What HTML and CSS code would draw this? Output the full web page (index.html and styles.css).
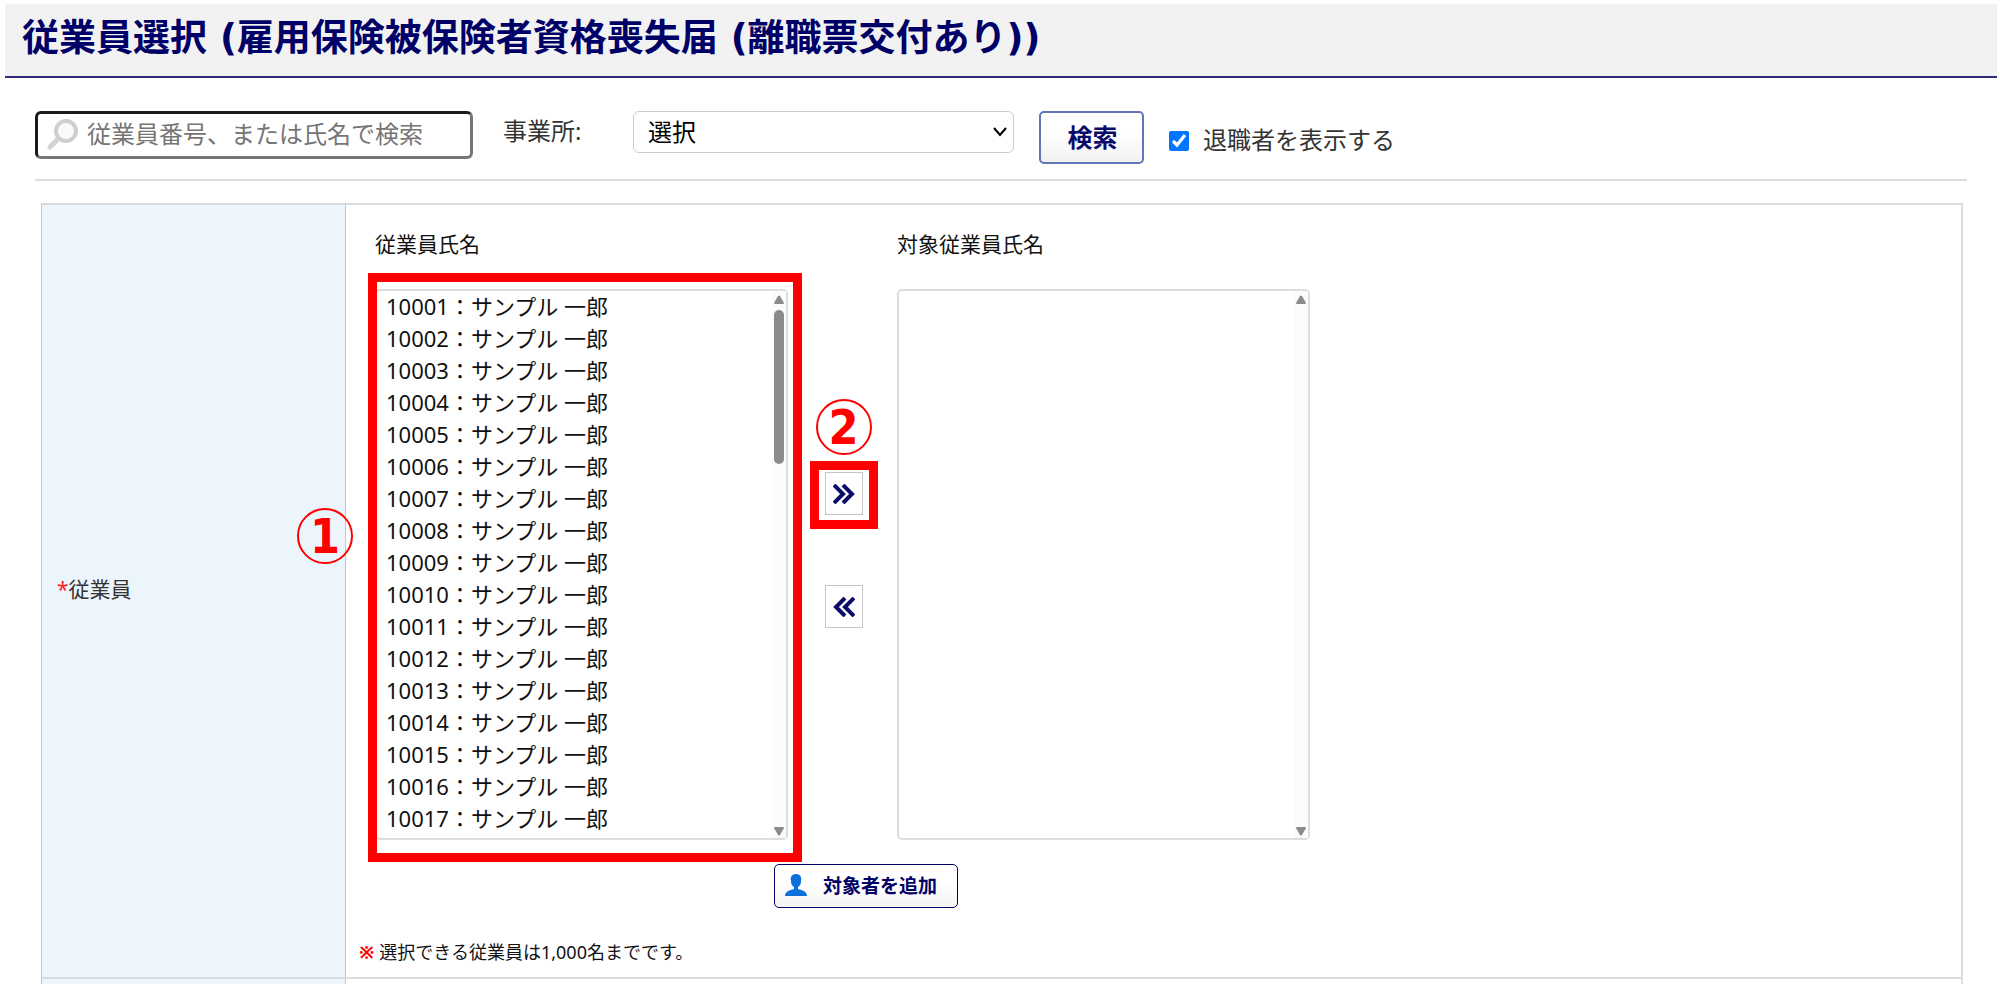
FILE: index.html
```html
<!DOCTYPE html>
<html lang="ja">
<head>
  <meta charset="UTF-8" />
  <meta name="viewport" content="width=device-width, initial-scale=1.0"/>
  <title>従業員選択</title>
  <link rel="stylesheet" href="styles.css">
</head>
<body>
  <header class="page-title">
    <h1>従業員選択 (雇用保険被保険者資格喪失届 (離職票交付あり))</h1>
  </header>

  <form class="search">
    <div class="search-box">
      <svg class="search-icon" viewBox="0 0 32 32" aria-hidden="true">
        <path d="M11 20 L3 28" stroke="#d2d2d2" stroke-width="5" stroke-linecap="round"/>
        <circle cx="19" cy="12" r="10" fill="#fafafa" stroke="#cfcfcf" stroke-width="4"/>
      </svg>
      <input type="text" class="search-input" aria-label="従業員検索" placeholder="従業員番号、または氏名で検索" />
    </div>
    <label class="office-label" for="office">事業所:</label>
    <div class="office-box">
      <select id="office" class="office">
        <option>選択</option>
      </select>
      <svg class="office-arrow" viewBox="0 0 16 16" aria-hidden="true">
        <path d="M2 4 L8 11 L14 4" fill="none" stroke="#000" stroke-width="2"/>
      </svg>
    </div>
    <button type="button" class="search-button">検索</button>
    <div class="retired">
      <input type="checkbox" id="retired" checked />
      <label for="retired">退職者を表示する</label>
    </div>
  </form>

  <table class="form-table">
    <tr>
      <th scope="row"><span class="required">*</span>従業員<span class="step step-one">1</span></th>
      <td>
        <div class="picker">
          <label class="list-label" for="source">従業員氏名</label>
          <span></span>
          <label class="list-label" for="target">対象従業員氏名</label>

          <div class="listbox">
            <select id="source" multiple>
              <option>10001：サンプル 一郎</option>
              <option>10002：サンプル 一郎</option>
              <option>10003：サンプル 一郎</option>
              <option>10004：サンプル 一郎</option>
              <option>10005：サンプル 一郎</option>
              <option>10006：サンプル 一郎</option>
              <option>10007：サンプル 一郎</option>
              <option>10008：サンプル 一郎</option>
              <option>10009：サンプル 一郎</option>
              <option>10010：サンプル 一郎</option>
              <option>10011：サンプル 一郎</option>
              <option>10012：サンプル 一郎</option>
              <option>10013：サンプル 一郎</option>
              <option>10014：サンプル 一郎</option>
              <option>10015：サンプル 一郎</option>
              <option>10016：サンプル 一郎</option>
              <option>10017：サンプル 一郎</option>
            </select>
            <div class="scroll">
              <svg viewBox="0 0 12 10" aria-hidden="true"><path d="M5 1 Q6 0 7 1 L11 8 Q11 9 10 9 H2 Q1 9 1 8 Z" fill="#8b8b8b"/></svg>
              <div class="thumb"></div>
              <svg class="down" viewBox="0 0 12 10" aria-hidden="true"><path d="M5 9 Q6 10 7 9 L11 2 Q11 1 10 1 H2 Q1 1 1 2 Z" fill="#8b8b8b"/></svg>
            </div>
            <div class="frame list-frame"></div>
          </div>

          <div class="movers">
            <div class="mover">
              <button type="button" aria-label="追加">
                <svg viewBox="0 0 22 20" aria-hidden="true"><path d="M1 1 L10 10 L1 19 M10 1 L19 10 L10 19" fill="none" stroke="#0b0b6b" stroke-width="4"/></svg>
              </button>
              <div class="frame mover-frame"></div>
              <span class="step step-two">2</span>
            </div>
            <div class="mover">
              <button type="button" aria-label="削除">
                <svg viewBox="0 0 22 20" aria-hidden="true"><path d="M21 1 L12 10 L21 19 M12 1 L3 10 L12 19" fill="none" stroke="#0b0b6b" stroke-width="4"/></svg>
              </button>
            </div>
          </div>

          <div class="listbox">
            <select id="target" multiple></select>
            <div class="scroll">
              <svg viewBox="0 0 12 10" aria-hidden="true"><path d="M5 1 Q6 0 7 1 L11 8 Q11 9 10 9 H2 Q1 9 1 8 Z" fill="#8b8b8b"/></svg>
              <svg class="down" viewBox="0 0 12 10" aria-hidden="true"><path d="M5 9 Q6 10 7 9 L11 2 Q11 1 10 1 H2 Q1 1 1 2 Z" fill="#8b8b8b"/></svg>
            </div>
          </div>
        </div>

        <button type="button" class="add-button">
          <svg viewBox="0 0 22 22" aria-hidden="true"><path d="M11 0 C7 0 5 3 6 7 C6 10 7 12 9 13 V15 C6 16 0 17 0 22 H22 C22 17 16 16 13 15 V13 C15 12 16 10 16 7 C17 3 15 0 11 0 Z" fill="#0b70db"/></svg>
          対象者を追加
        </button>
        <p class="note"><strong>※</strong>選択できる従業員は1,000名までです。</p>
      </td>
    </tr>
    <tr class="next-row">
      <th></th>
      <td></td>
    </tr>
  </table>
</body>
</html>
```

FILE: styles.css
```css
* {
  box-sizing: border-box;
}
body {
  margin: 4px 3px 0 5px;
  font-family: "Noto Sans", "Noto Sans CJK JP", sans-serif;
  font-size: 24px;
  color: #333;
  background: #fff;
}
input, select, button {
  font-family: inherit;
  margin: 0;
}
.page-title {
  background: #f2f2f2;
  border-bottom: 2px solid #2b2b78;
  padding: 11px 17px 13px;
}
h1 {
  margin: 0;
  font-family: "DejaVu Sans", "Noto Sans CJK JP", sans-serif;
  font-size: 37px;
  line-height: 48px;
  color: #000066;
}

/* search bar */
.search {
  display: flex;
  align-items: flex-start;
  margin: 33px 30px 0;
  height: 70px;
  border-bottom: 2px solid #ddd;
}
.search-box {
  display: flex;
  align-items: center;
  width: 438px;
  height: 48px;
  padding-left: 9px;
  border: 3px solid;
  border-color: #1b1b1b #767676 #767676 #1b1b1b;
  border-radius: 6px;
}
.search-icon {
  width: 32px;
  height: 32px;
}
.search-input {
  flex: 1;
  min-width: 0;
  padding: 0 0 4px 8px;
  border: none;
  outline: none;
  font-size: 24px;
  background: none;
}
.search-input::placeholder {
  color: #757575;
}
.office-label {
  width: 130px;
  margin-left: 30px;
  line-height: 40px;
}
.office-box {
  position: relative;
  width: 381px;
}
.office {
  appearance: none;
  width: 100%;
  height: 42px;
  padding: 0 14px 2px;
  border: 1px solid #ccc;
  border-radius: 6px;
  background: #fff;
  font-size: 24px;
  color: #000;
}
.office-arrow {
  position: absolute;
  right: 6px;
  top: 13px;
  width: 16px;
  height: 16px;
  pointer-events: none;
}
.search-button {
  width: 105px;
  height: 53px;
  margin-left: 25px;
  padding: 0 0 4px 2px;
  border: 2px solid #6474b8;
  border-radius: 5px;
  background: linear-gradient(#fff 40%, #f2f2f2);
  font-size: 25px;
  font-weight: bold;
  color: #0b0b6b;
}
.retired {
  display: flex;
  align-items: center;
  gap: 14px;
  margin-left: 25px;
  height: 60px;
}
.retired input {
  width: 20px;
  height: 20px;
  accent-color: #0075ff;
}
.retired label {
  padding-bottom: 6px;
}

/* form */
.form-table {
  width: calc(100% - 70px);
  margin: 22px 34px 0 36px;
  border-spacing: 0;
  border-right: 2px solid #ddd;
}
.form-table th {
  position: relative;
  width: 305px;
  padding: 0 0 6px 15px;
  border: 1px solid #c4c8cc;
  border-top: 2px solid #d8dcde;
  border-bottom: none;
  background: #edf5fc;
  text-align: left;
  font-size: 21px;
  font-weight: normal;
}
.form-table td {
  padding: 23px 0 12px;
  border-top: 2px solid #ddd;
}
.form-table .next-row th,
.form-table .next-row td {
  height: 7px;
  padding: 0;
}
.required {
  color: #f22;
}
.picker {
  display: grid;
  grid-template-columns: 413px 109px 413px;
  row-gap: 29px;
  margin-left: 29px;
}
.list-label {
  font-size: 21px;
  line-height: 32px;
  color: #111;
}
.listbox {
  position: relative;
  display: flex;
  height: 551px;
  border: 2px solid #ddd;
  border-radius: 5px;
}
.listbox select {
  flex: 1;
  min-width: 0;
  margin-top: -2px;
  padding: 0;
  border: none;
  outline: none;
  background: none;
  font-size: 22px;
  scrollbar-width: none;
}
.listbox option {
  padding: 0 0 0 9px;
  color: #111;
}
.scroll {
  display: flex;
  flex-direction: column;
  align-items: center;
  width: 14px;
  padding: 4px 0 2px;
  background: #fbfbfb;
}
.scroll svg {
  width: 12px;
  height: 10px;
}
.scroll .down {
  margin-top: auto;
}
.thumb {
  width: 10px;
  height: 154px;
  margin-top: 5px;
  border-radius: 5px;
  background: #8b8b8b;
}
.movers {
  display: flex;
  flex-direction: column;
  align-items: center;
  gap: 70px;
  padding: 183px 0 0 2px;
}
.mover {
  position: relative;
}
.mover button {
  display: flex;
  align-items: center;
  justify-content: center;
  width: 38px;
  height: 43px;
  padding: 0;
  border: 1px solid #c4c4c4;
  background: #fff;
}
.mover svg {
  width: 22px;
  height: 20px;
}
.add-button {
  display: flex;
  align-items: center;
  gap: 16px;
  width: 184px;
  height: 44px;
  margin: 24px 0 0 428px;
  padding: 0 0 2px 10px;
  border: 1px solid #000066;
  border-radius: 5px;
  background: linear-gradient(#fff 40%, #f4f4f4);
  font-size: 19px;
  font-weight: bold;
  color: #000066;
}
.add-button svg {
  width: 22px;
  height: 22px;
}
.note {
  margin: 31px 0 0 13px;
  font-size: 18px;
  line-height: 26px;
  color: #111;
}
.note strong {
  margin-right: 5px;
  color: #f00;
}

/* numbered steps and red frames */
.frame {
  position: absolute;
  border: 9px solid #f00;
  pointer-events: none;
}
.list-frame {
  inset: -18px -16px -24px -9px;
}
.mover-frame {
  inset: -11px -15px -14px;
}
.step {
  position: absolute;
  width: 56px;
  height: 56px;
  border: 2px solid #f00;
  border-radius: 50%;
  font-family: "DejaVu Sans Condensed", "DejaVu Sans", sans-serif;
  font-size: 48px;
  font-weight: bold;
  line-height: 52px;
  text-align: center;
  color: #f00;
}
.step-one {
  right: -8px;
  top: 303px;
}
.step-two {
  left: -9px;
  top: -73px;
}
```
